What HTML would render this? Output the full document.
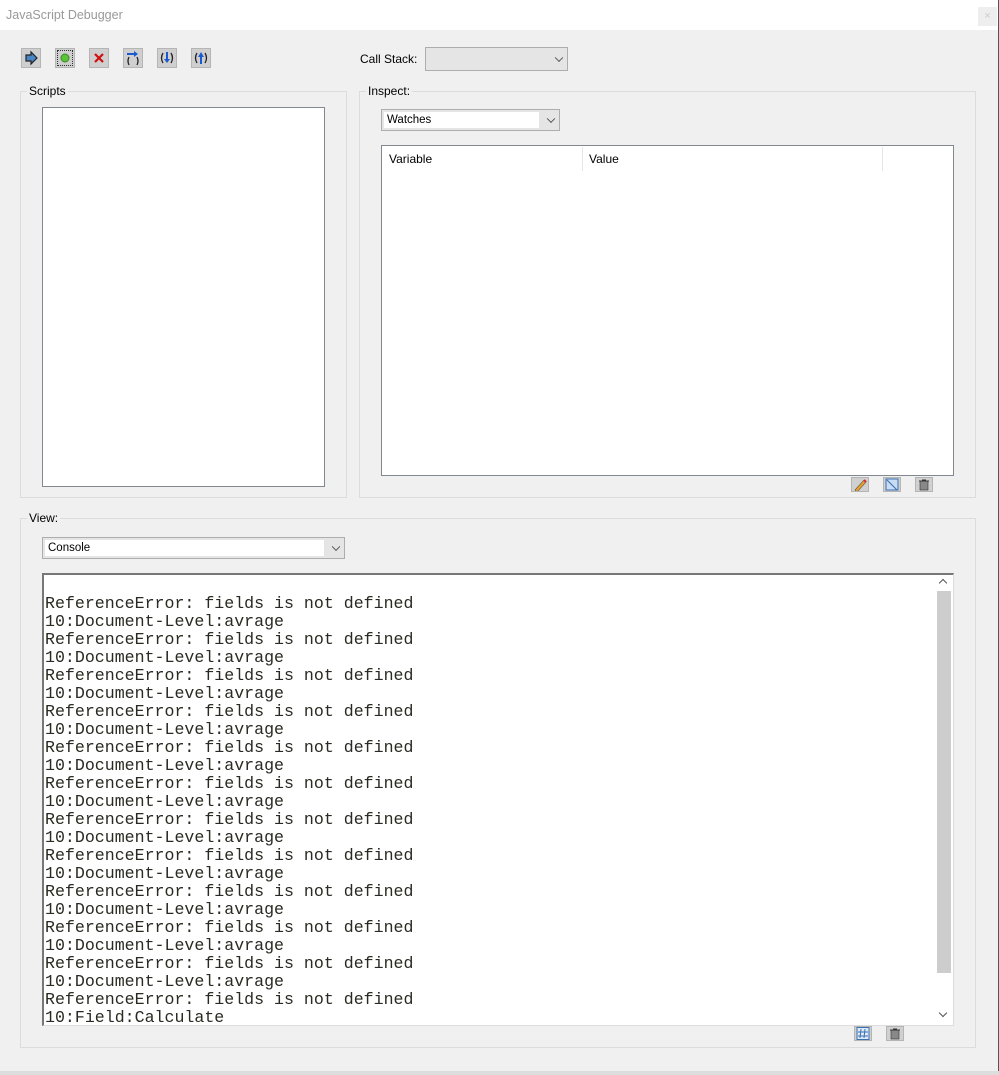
<!DOCTYPE html>
<html><head><meta charset="utf-8"><style>
*{box-sizing:border-box;margin:0;padding:0}
body{width:999px;height:1075px;background:#f0f0f0;position:relative;overflow:hidden;font-family:"Liberation Sans",sans-serif;font-size:12px;color:#000}
.a{position:absolute}
.title{left:0;top:0;width:999px;height:30px;background:#fff;color:#999;font-size:12.5px;padding:8px 0 0 6px}
.btn{width:20px;height:20px;background:#cfcfcf;border:1px solid #b5b5b5}
.btn svg{display:block}
.grp{border:1px solid #dcdcdc}
.lbl{background:#f0f0f0;padding:0 2px;font-size:12px}
.dd{border:1px solid #adadad;background:#e5e5e5}
.dd .in{position:absolute;left:2px;top:2px;bottom:2px;right:20px;background:#fff;padding:2px 3px;font-size:11.5px}
.chev{position:absolute;right:5px;top:50%;width:6px;height:6px;border-right:1px solid #555;border-bottom:1px solid #555;transform:translateY(-70%) rotate(45deg)}
.box{background:#fff;border:1px solid #828790}
.ibtn{width:18px;height:15px;background:#d0d0d0;border:1px solid #b5b5b5}
.con{font-family:"Liberation Mono",monospace;font-size:16.6px;line-height:18px;color:#2a2a22;white-space:pre}
</style></head><body>
<div class="a title">JavaScript Debugger</div>
<div class="a" style="left:978px;top:7px;width:19px;height:19px;background:#eee;color:#ccc;font-size:11px;text-align:center;line-height:19px">×</div>
<div class="a" style="left:998px;top:0;width:1px;height:1075px;background:#555"></div>
<div class="a" style="left:0;top:1071px;width:999px;height:4px;background:#ddd"></div>

<div class="a btn" style="left:21px;top:48px"><svg width="18" height="18"><path d="M4 6h5V3l6 6-6 6v-3H4z" fill="#4a86c5" stroke="#222" stroke-width="1.2"/></svg></div>
<div class="a btn" style="left:55px;top:48px;outline:1px dotted #333;outline-offset:-3px"><svg width="18" height="18"><circle cx="9" cy="9" r="4" fill="#5cc23a" stroke="#3a8a22"/></svg></div>
<div class="a btn" style="left:89px;top:48px"><svg width="18" height="18"><path d="M5 5l8 8M13 5l-8 8" stroke="#d01010" stroke-width="2.2"/></svg></div>
<div class="a btn" style="left:123px;top:48px"><svg width="18" height="18"><path d="M3 5h8" stroke="#1a5ad0" stroke-width="2"/><path d="M10 2l4 3-4 3z" fill="#1a5ad0"/><path d="M5 8q-2 4 0 8M13 8q2 4 0 8" stroke="#222" fill="none" stroke-width="1.3"/></svg></div>
<div class="a btn" style="left:157px;top:48px"><svg width="18" height="18"><path d="M5 4q-3 5 0 10M13 4q3 5 0 10" stroke="#222" fill="none" stroke-width="1.3"/><path d="M9 3v8" stroke="#1a5ad0" stroke-width="2"/><path d="M6 10h6l-3 4z" fill="#1a5ad0"/></svg></div>
<div class="a btn" style="left:191px;top:48px"><svg width="18" height="18"><path d="M5 4q-3 5 0 10M13 4q3 5 0 10" stroke="#222" fill="none" stroke-width="1.3"/><path d="M9 7v8" stroke="#1a5ad0" stroke-width="2"/><path d="M6 8h6l-3-5z" fill="#1a5ad0"/></svg></div>

<div class="a" style="left:360px;top:52px">Call Stack:</div>
<div class="a dd" style="left:425px;top:47px;width:143px;height:24px"><div class="chev"></div></div>

<div class="a grp" style="left:20px;top:91px;width:327px;height:407px"></div>
<div class="a lbl" style="left:27px;top:84px">Scripts</div>
<div class="a box" style="left:42px;top:107px;width:283px;height:380px"></div>

<div class="a grp" style="left:359px;top:91px;width:617px;height:407px"></div>
<div class="a lbl" style="left:366px;top:84px">Inspect:</div>
<div class="a dd" style="left:381px;top:109px;width:179px;height:22px"><div class="in">Watches</div><div class="chev"></div></div>
<div class="a box" style="left:381px;top:145px;width:573px;height:331px"></div>
<div class="a" style="left:389px;top:152px">Variable</div>
<div class="a" style="left:589px;top:152px">Value</div>
<div class="a" style="left:582px;top:147px;width:1px;height:24px;background:#e5e5e5"></div>
<div class="a" style="left:882px;top:147px;width:1px;height:24px;background:#e5e5e5"></div>
<div class="a ibtn" style="left:851px;top:477px"><svg width="16" height="13"><path d="M3 12l9-10 2 2-9 10z" fill="#f0a030" stroke="#553" stroke-width=".6"/><path d="M12 2l2 2" stroke="#d03030" stroke-width="2"/></svg></div>
<div class="a ibtn" style="left:883px;top:477px"><svg width="16" height="13"><rect x="2" y="1" width="12" height="11" fill="#c8dcf4" stroke="#3a6fb0"/><path d="M3 2l10 10" stroke="#3a6fb0"/></svg></div>
<div class="a ibtn" style="left:915px;top:477px"><svg width="16" height="13"><rect x="4" y="3" width="8" height="9" fill="#888" stroke="#333" stroke-width=".6"/><path d="M3 3h10M6 2h4" stroke="#333"/></svg></div>

<div class="a grp" style="left:20px;top:518px;width:956px;height:530px"></div>
<div class="a lbl" style="left:27px;top:511px">View:</div>
<div class="a dd" style="left:42px;top:537px;width:303px;height:22px"><div class="in">Console</div><div class="chev"></div></div>
<div class="a" style="left:42px;top:573px;width:912px;height:453px;background:#fff;border:1px solid #ddd;border-top:2px solid #777;border-left:2px solid #777"></div>
<div class="a" style="left:937px;top:591px;width:14px;height:382px;background:#cdcdcd"></div>
<div class="a" style="left:940px;top:580px;width:6px;height:6px;border-left:1.5px solid #555;border-top:1.5px solid #555;transform:rotate(45deg)"></div>
<div class="a" style="left:940px;top:1010px;width:6px;height:6px;border-right:1.5px solid #555;border-bottom:1.5px solid #555;transform:rotate(45deg)"></div>
<div class="a con" style="left:45px;top:595px">ReferenceError: fields is not defined
10:Document-Level:avrage
ReferenceError: fields is not defined
10:Document-Level:avrage
ReferenceError: fields is not defined
10:Document-Level:avrage
ReferenceError: fields is not defined
10:Document-Level:avrage
ReferenceError: fields is not defined
10:Document-Level:avrage
ReferenceError: fields is not defined
10:Document-Level:avrage
ReferenceError: fields is not defined
10:Document-Level:avrage
ReferenceError: fields is not defined
10:Document-Level:avrage
ReferenceError: fields is not defined
10:Document-Level:avrage
ReferenceError: fields is not defined
10:Document-Level:avrage
ReferenceError: fields is not defined
10:Document-Level:avrage
ReferenceError: fields is not defined
10:Field:Calculate</div>
<div class="a ibtn" style="left:854px;top:1026px"><svg width="16" height="13"><rect x="2" y="0.5" width="12" height="12" fill="#dfeaf8" stroke="#3a6fb0"/><path d="M6 2l-1 9M10 2l-1 9M3 5h10M3 9h10" stroke="#3a6fb0"/></svg></div>
<div class="a ibtn" style="left:886px;top:1026px"><svg width="16" height="13"><rect x="4" y="3" width="8" height="9" fill="#888" stroke="#333" stroke-width=".6"/><path d="M3 3h10M6 2h4" stroke="#333"/></svg></div>
</body></html>
